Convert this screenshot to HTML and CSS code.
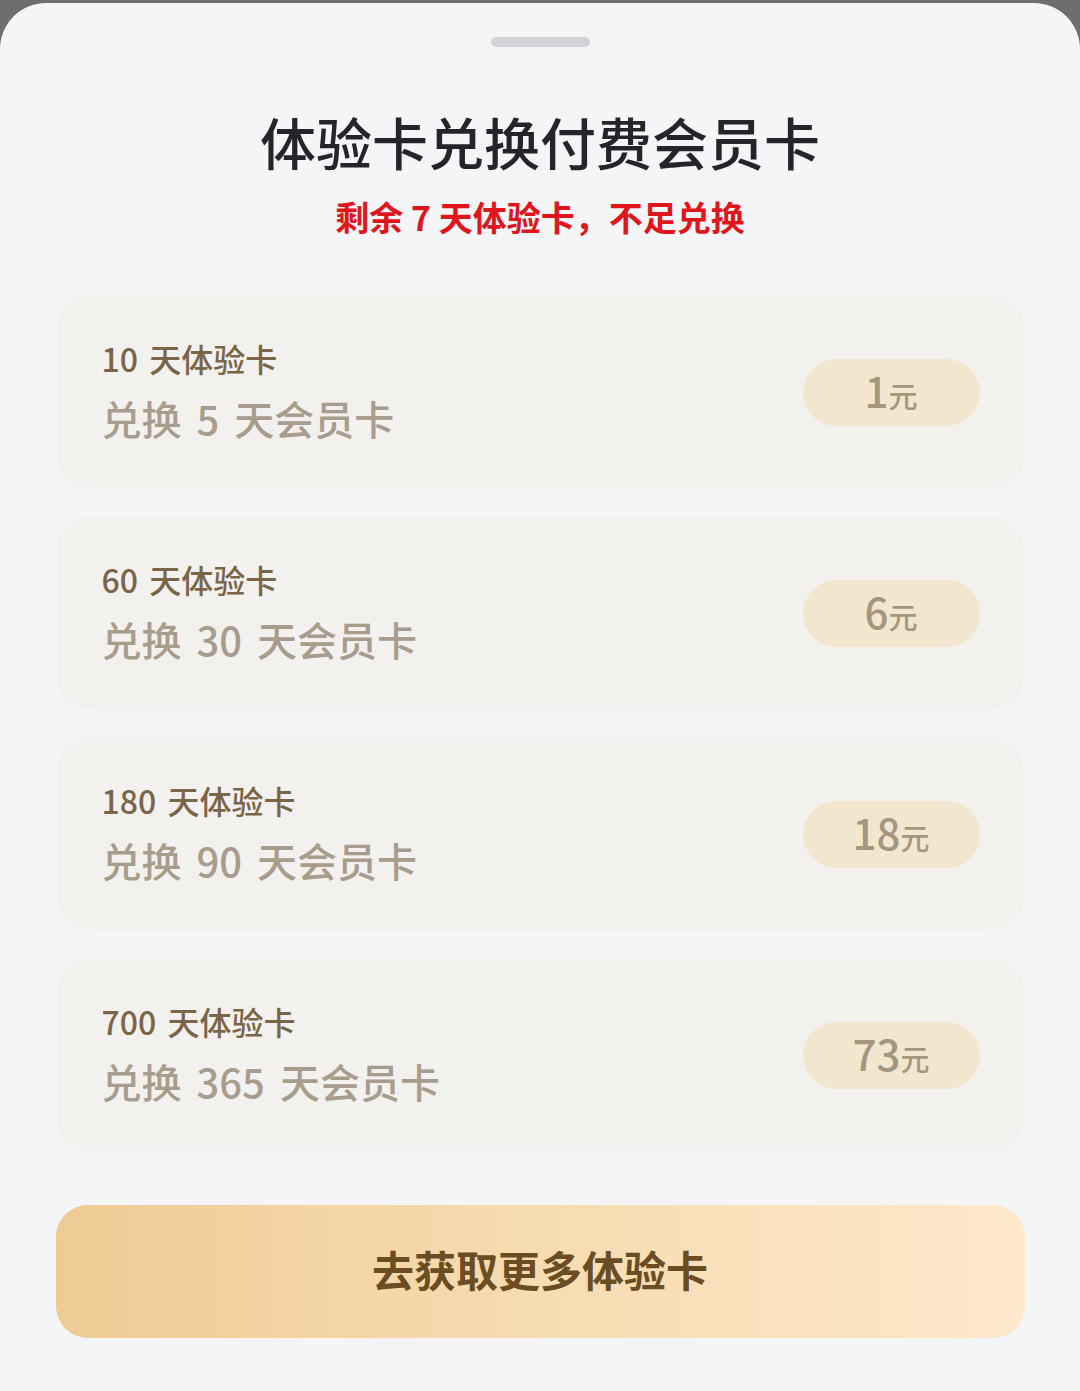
FILE: index.html
```html
<!DOCTYPE html>
<html lang="zh-CN">
<head>
<meta charset="utf-8">
<title>体验卡兑换付费会员卡</title>
<link rel="stylesheet" href="styles.css">
</head>
<body>
<div class="sheet">
  <div class="handle"></div>
  <h1 class="title">体验卡兑换付费会员卡</h1>
  <p class="notice">剩余 7 天体验卡，不足兑换</p>
  <div class="list">
    <div class="card">
      <div class="info">
        <div class="trial">10 天体验卡</div>
        <div class="member">兑换 5 天会员卡</div>
      </div>
      <div class="price"><span class="num">1</span><span class="unit">元</span></div>
    </div>
    <div class="card">
      <div class="info">
        <div class="trial">60 天体验卡</div>
        <div class="member">兑换 30 天会员卡</div>
      </div>
      <div class="price"><span class="num">6</span><span class="unit">元</span></div>
    </div>
    <div class="card">
      <div class="info">
        <div class="trial">180 天体验卡</div>
        <div class="member">兑换 90 天会员卡</div>
      </div>
      <div class="price"><span class="num">18</span><span class="unit">元</span></div>
    </div>
    <div class="card">
      <div class="info">
        <div class="trial">700 天体验卡</div>
        <div class="member">兑换 365 天会员卡</div>
      </div>
      <div class="price"><span class="num">73</span><span class="unit">元</span></div>
    </div>
  </div>
  <button class="cta">去获取更多体验卡</button>
</div>
</body>
</html>
```

FILE: styles.css
```css
html, body {
  margin: 0;
  padding: 0;
}
body {
  background: #6e6e6e;
  font-family: "Noto Sans CJK SC", "Noto Sans", sans-serif;
  min-height: 1391px;
}
.sheet {
  margin-top: 3px;
  background: #f4f5f7;
  border-radius: 46px 46px 0 0;
  min-height: 1388px;
  display: flex;
  flex-direction: column;
  align-items: center;
  padding-top: 34px;
  box-sizing: border-box;
}
.handle {
  width: 99px;
  height: 10px;
  border-radius: 5px;
  background: #d2d3d6;
}
.title {
  margin: 66px 0 0;
  font-size: 56px;
  line-height: 56px;
  font-weight: 500;
  color: #23252b;
}
.notice {
  margin: 31px 0 0;
  font-size: 34px;
  line-height: 34px;
  font-weight: 700;
  color: #e0161c;
}
.list {
  margin-top: 63px;
  width: 967px;
  display: flex;
  flex-direction: column;
  gap: 31px;
}
.card {
  height: 190px;
  box-sizing: border-box;
  border-radius: 32px;
  background: #f3f1ee;
  box-shadow: 0 0 10px rgba(120, 100, 70, 0.03);
  display: flex;
  align-items: center;
  justify-content: space-between;
  padding: 0 44px 5px 45px;
}
.info {
  display: flex;
  flex-direction: column;
  gap: 24px;
}
.trial {
  font-size: 32px;
  line-height: 32px;
  color: #7a6549;
  font-weight: 500;
  word-spacing: 4px;
}
.member {
  font-size: 40px;
  line-height: 40px;
  color: #a89c8d;
  font-weight: 500;
  word-spacing: 6px;
}
.price {
  width: 177px;
  height: 67px;
  margin-top: 5px;
  border-radius: 34px;
  background: #f3e6cf;
  display: flex;
  align-items: baseline;
  justify-content: center;
  color: #a4967f;
  line-height: 62px;
}
.num {
  font-size: 42px;
  font-weight: 500;
}
.unit {
  font-size: 29px;
  font-weight: 500;
}
.cta {
  margin-top: 55px;
  width: 969px;
  height: 133px;
  border: none;
  border-radius: 32px;
  background: linear-gradient(90deg, #efcb94 0%, #f7dcb1 50%, #fde8cc 100%);
  font-family: "Noto Sans CJK SC", "Noto Sans", sans-serif;
  font-size: 42px;
  line-height: 42px;
  font-weight: 700;
  color: #6b4d24;
  padding: 0 0 5px;
}
```
